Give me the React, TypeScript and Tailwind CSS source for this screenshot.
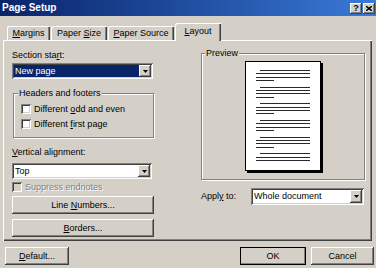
import React from 'react';

const raised =
  'bg-[#d4d0c8] shadow-[inset_-1px_-1px_#404040,inset_1px_1px_#ffffff,inset_-2px_-2px_#808080,inset_2px_2px_#d4d0c8]';
const sunken =
  'shadow-[inset_1px_1px_#808080,inset_-1px_-1px_#ffffff,inset_2px_2px_#404040,inset_-2px_-2px_#d4d0c8]';

const Arrow = () => (
  <svg width="5" height="3" viewBox="0 0 5 3">
    <path d="M0 0h5L2.5 3z" fill="#000" />
  </svg>
);

const Button: React.FC<{ children: React.ReactNode; className?: string }> = ({ children, className = '' }) => (
  <div className={`flex items-center justify-center h-[18px] ${raised} ${className}`}>{children}</div>
);

const Select: React.FC<{ value: string; selected?: boolean; className?: string }> = ({
  value,
  selected,
  className = '',
}) => (
  <div className={`flex items-stretch bg-white p-[2px] ${sunken} ${className}`}>
    <div className={`flex-1 flex items-center pl-[1px] ${selected ? 'bg-[#0a246a] text-white' : ''}`}>{value}</div>
    <div className={`w-[12px] flex items-center justify-center ${raised}`}>
      <Arrow />
    </div>
  </div>
);

const Check: React.FC<{ label: React.ReactNode; disabled?: boolean; className?: string }> = ({
  label,
  disabled,
  className = '',
}) => (
  <div className={`flex items-center h-[10px] ${className}`}>
    <div className={`w-[10px] h-[10px] shrink-0 ${sunken} ${disabled ? 'bg-[#d4d0c8]' : 'bg-white'}`} />
    <span
      className={`ml-[3px] ${disabled ? 'text-[#808080] [text-shadow:1px_1px_0_#fff]' : ''}`}
    >
      {label}
    </span>
  </div>
);

const groups = [0, 1, 2, 3, 4, 5];

const PageDrawing = () => (
  <svg width="74" height="108" viewBox="0 0 74 108" className="block">
    {groups.map((k) => {
      const g = 8 + k * 16.67;
      const ys = k === 5 ? [g, g + 3.33, g + 6.67] : [g, g + 3.33, g + 6.67, g + 10];
      return ys.map((y, i) => {
        const yy = Math.round(y) + 0.5;
        const x1 = i === 0 ? 14 : 10;
        const x2 = i === 3 ? 28 : 64;
        return <line key={`${k}-${i}`} x1={x1} x2={x2} y1={yy} y2={yy} stroke="#2a2a2a" strokeWidth="1" />;
      });
    })}
  </svg>
);

const App: React.FC = () => {
  return (
    <div className="w-[376px] h-[268px] overflow-hidden bg-[#d4d0c8] text-black text-[9px] leading-[11px] font-['Liberation_Sans',Arial,sans-serif] flex flex-col">
      {/* Title bar */}
      <div className="h-[16px] shrink-0 flex items-center justify-between pl-[2px] pr-[1px] bg-gradient-to-r from-[#0a246a] to-[#3a7ad8]">
        <span className="text-white font-bold text-[10px] leading-[12px]">Page Setup</span>
        <div className="flex gap-[1px]">
          <div className={`w-[12px] h-[11px] flex items-center justify-center font-bold text-[9px] leading-[9px] ${raised}`}>
            ?
          </div>
          <div className={`w-[12px] h-[11px] flex items-center justify-center ${raised}`}>
            <svg width="6" height="5" viewBox="0 0 6 5">
              <path d="M0 0l6 5M6 0L0 5" stroke="#000" strokeWidth="1.4" />
            </svg>
          </div>
        </div>
      </div>

      {/* Tabs */}
      <div className="h-[24px] shrink-0 flex items-end pl-[7px]">
        <div className="w-[43px] h-[14px] flex items-center justify-center rounded-tl-[2px] shadow-[inset_1px_1px_#ffffff,inset_-1px_0_#404040,inset_-2px_0_#808080]">
          <span><u>M</u>argins</span>
        </div>
        <div className="ml-[1px] w-[56px] h-[14px] flex items-center justify-center rounded-tl-[2px] shadow-[inset_1px_1px_#ffffff,inset_-1px_0_#404040,inset_-2px_0_#808080]">
          <span>Paper <u>S</u>ize</span>
        </div>
        <div className="ml-[1px] w-[66px] h-[14px] flex items-center justify-center rounded-tl-[2px] shadow-[inset_1px_1px_#ffffff,inset_-1px_0_#404040,inset_-2px_0_#808080]">
          <span><u>P</u>aper Source</span>
        </div>
        <div className="relative z-10 -mb-[1px] ml-[1px] w-[46px] h-[18px] flex justify-center pt-[3px] bg-[#d4d0c8] rounded-tl-[2px] shadow-[inset_1px_1px_#ffffff,inset_-1px_0_#404040,inset_-2px_0_#808080]">
          <span><u>L</u>ayout</span>
        </div>
      </div>

      {/* Panel */}
      <div className="ml-[3px] w-[369px] h-[201px] shrink-0 flex pl-[9px] shadow-[inset_1px_1px_#ffffff,inset_-1px_-1px_#404040,inset_-2px_-2px_#808080]">
        {/* Left column */}
        <div className="w-[142px] flex flex-col">
          <div className="mt-[10px] h-[11px]">
            Section sta<u>r</u>t:
          </div>
          <Select value="New page" selected className="mt-[2px] h-[16px] w-[141px]" />

          <div className="relative mt-[14px] ml-[1px] w-[141px] h-[45px] border border-[#808080] shadow-[inset_1px_1px_#ffffff,1px_1px_#ffffff] pl-[7px] pt-[10px]">
            <span className="absolute -top-[6px] left-[4px] px-[1px] bg-[#d4d0c8]">Headers and footers</span>
            <Check label={<>Different <u>o</u>dd and even</>} />
            <Check label={<>Different <u>f</u>irst page</>} className="mt-[5px]" />
          </div>

          <div className="mt-[9px] h-[11px]">
            <u>V</u>ertical alignment:
          </div>
          <Select value="Top" className="mt-[5px] h-[16px] w-[140px]" />
          <Check label="Suppress endnotes" disabled className="mt-[3px]" />
          <Button className="mt-[4px] w-[142px]">
            <span>Line <u>N</u>umbers...</span>
          </Button>
          <Button className="mt-[5px] w-[142px]">
            <span><u>B</u>orders...</span>
          </Button>
        </div>

        {/* Right column */}
        <div className="ml-[47px] w-[164px] flex flex-col">
          <div className="relative mt-[13px] w-[164px] h-[127px] border border-[#808080] shadow-[inset_1px_1px_#ffffff,1px_1px_#ffffff] flex justify-center pt-[7px]">
            <span className="absolute -top-[6px] left-[3px] px-[1px] bg-[#d4d0c8]">Preview</span>
            <div className="w-[76px] h-[110px] bg-white border border-black shadow-[2px_2px_0_#000]">
              <PageDrawing />
            </div>
          </div>
          <div className="mt-[8px] flex items-center">
            <span className="w-[50px]">
              Appl<u>y</u> to:
            </span>
            <Select value="Whole document" className="h-[17px] w-[113px]" />
          </div>
        </div>
      </div>

      {/* Bottom buttons */}
      <div className="mt-[6px] flex pl-[5px] pr-[2px]">
        <Button className="w-[64px]">
          <span><u>D</u>efault...</span>
        </Button>
        <Button className="ml-auto w-[66px] outline outline-1 outline-[#000] -outline-offset-1">
          <span>OK</span>
        </Button>
        <Button className="ml-[5px] w-[63px]">
          <span>Cancel</span>
        </Button>
      </div>
    </div>
  );
};

export default App;
